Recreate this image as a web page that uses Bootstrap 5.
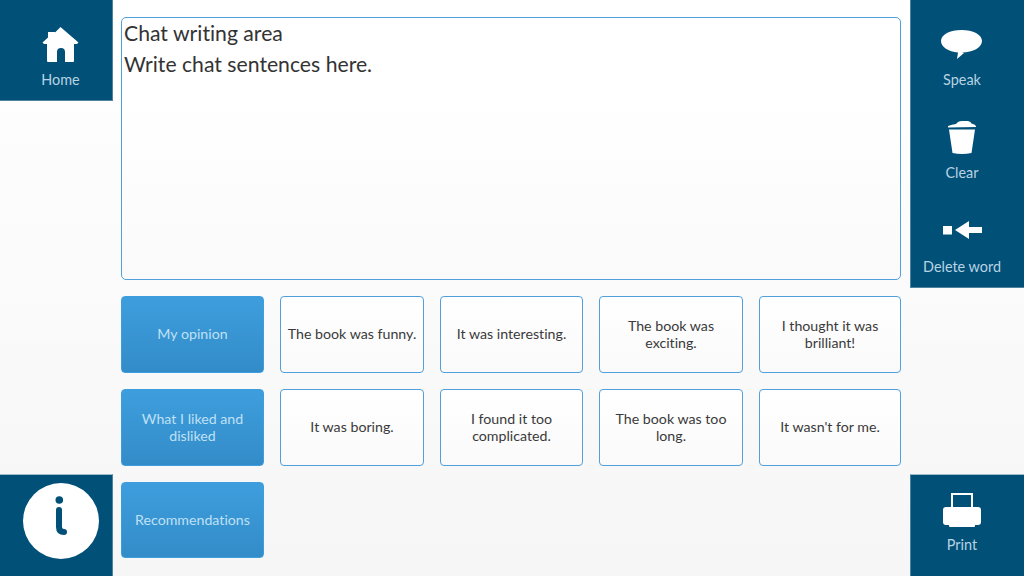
<!DOCTYPE html>
<html lang="en">
<head>
<meta charset="utf-8">
<title>Chat writing</title>
<link rel="stylesheet" href="https://cdn.jsdelivr.net/npm/bootstrap@5.3.0/dist/css/bootstrap.min.css">
<style>
html,body{height:576px;overflow:hidden}
body{font-family:"Lato","Liberation Sans",sans-serif;font-variant-ligatures:none;background:linear-gradient(#fff,#f6f6f6);color:#333}
.app-shell{width:1024px;height:576px}
.side-col{width:113px;flex:none}
.side-col-r{width:114px;flex:none;margin-left:9px}
.panel-dark{background:#005078;color:#b9d3e2;font-size:14.4px;line-height:17px;border:1px solid #4d83a0;border-width:0 1px 1px 0;padding-left:9px}
.side-col-r .panel-dark{border-width:0 0 1px 1px;padding-left:0;padding-right:11px}
.side-tools{height:288px}
.tool-btn{height:94px;padding-top:26px}
.tool-btn:first-child{height:93px}
.tool-first{height:101px;padding-top:26px}
.tool-icon{height:37px;margin-bottom:8px}
.panel-bottom{height:102px;border-width:1px 1px 0 0!important;border-top-color:#9dbccd!important}
.panel-info{padding-bottom:10px}
.panel-print{padding-top:16px}
.side-col-r .panel-bottom{border-width:1px 0 0 1px!important}
.center-col{width:780px;flex:none;margin-left:8px;padding-top:17px}
.write-box{height:263px;border:1px solid #4fa0dc;border-radius:5px;padding:0 3px 0 2px;font-size:21.2px;line-height:31px;color:#333;margin-bottom:16px;background:linear-gradient(#fff 30%,#fafafa)}
.phrase-grid{display:grid;grid-template-columns:143px 144px 143px 144px 142px;grid-auto-rows:77px;gap:16px}
.phrase{border:1px solid #4fa0dc;border-radius:4px;background:linear-gradient(#fff,#fafafa);font-size:14.2px;line-height:17px;color:#3a3a3a;padding:0 2px 2px;text-align:center}
.phrase-wrap{padding:0 8px 2px}
.phrase-cat{background:linear-gradient(#3e9edd,#338cc8);border-color:#3e9edd;color:#bfe0f5}
.last-row{height:76px}
.info-disc{width:76px;height:76px;background:#fff;border-radius:50%}
</style>
</head>
<body>
<div class="app-shell d-flex">
  <div class="side-col d-flex flex-column justify-content-between">
    <div class="panel-dark tool-first text-center">
      <div class="tool-icon d-flex justify-content-center">
        <svg width="37" height="37" viewBox="0 0 37 37" aria-hidden="true"><path fill="#fff" d="M18.500 1 L36.500 16.500 L35 18 L32 18 L32 35 Q32 36 31 36 L23 36 L23 26 Q23 22 19 22 Q15 22 15 26 L15 36 L6 36 Q5 36 5 35 L5 18 L2 18 L.5 16.500 L6 11.500 L6 6 L13 6 L13 6.500 Z"/></svg>
      </div>
      Home
    </div>
    <div class="panel-dark panel-bottom panel-info d-flex align-items-center justify-content-center">
      <div class="info-disc">
        <svg class="d-block" width="76" height="76" viewBox="0 0 76 76" aria-hidden="true"><circle cx="36.300" cy="17" r="3.800" fill="#005078"/><path d="M36 27 V44 Q36 49 41 49" fill="none" stroke="#005078" stroke-width="6" stroke-linecap="round"/></svg>
      </div>
    </div>
  </div>
  <div class="center-col">
    <div class="write-box">Chat writing area<br>Write chat sentences here.</div>
    <div class="phrase-grid">
      <div class="phrase phrase-cat d-flex align-items-center justify-content-center">My opinion</div>
      <div class="phrase d-flex align-items-center justify-content-center">The book was funny.</div>
      <div class="phrase d-flex align-items-center justify-content-center">It was interesting.</div>
      <div class="phrase phrase-wrap d-flex align-items-center justify-content-center">The book was exciting.</div>
      <div class="phrase phrase-wrap d-flex align-items-center justify-content-center">I thought it was brilliant!</div>
      <div class="phrase phrase-cat phrase-wrap d-flex align-items-center justify-content-center">What I liked and disliked</div>
      <div class="phrase d-flex align-items-center justify-content-center">It was boring.</div>
      <div class="phrase phrase-wrap d-flex align-items-center justify-content-center">I found it too complicated.</div>
      <div class="phrase phrase-wrap d-flex align-items-center justify-content-center">The book was too long.</div>
      <div class="phrase d-flex align-items-center justify-content-center">It wasn't for me.</div>
      <div class="phrase phrase-cat last-row d-flex align-items-center justify-content-center">Recommendations</div>
    </div>
  </div>
  <div class="side-col-r d-flex flex-column justify-content-between">
    <div class="panel-dark side-tools text-center">
      <div class="tool-btn">
        <div class="tool-icon d-flex justify-content-center">
          <svg width="42" height="37" viewBox="0 0 42 37" aria-hidden="true"><path fill="#fff" d="M20.500 4 C32 4 41 8.500 41 15 C41 21.500 32 26.500 21 26.500 L23 27 L16 33 L17 26.500 C7.500 25.500 0 21 0 15 C0 8.500 9 4 20.500 4Z"/></svg>
        </div>
        Speak
      </div>
      <div class="tool-btn">
        <div class="tool-icon d-flex justify-content-center">
          <svg width="30" height="37" viewBox="0 0 30 37" aria-hidden="true"><path fill="#fff" d="M1 7 Q5 5.500 9 5 Q11 2 15 2 L21 2 Q24 2.500 24.500 4.500 Q28 5 29 7 L29 8 L1 8.500Z M2 10.500 L28 10.500 L24.500 34 Q15 36 5.500 34Z"/></svg>
        </div>
        Clear
      </div>
      <div class="tool-btn">
        <div class="tool-icon d-flex justify-content-center">
          <svg width="40" height="37" viewBox="0 0 40 37" aria-hidden="true"><path fill="#fff" d="M1 13 H10 V21.500 H1Z M13 17 L27 8 V14 H40 V20 H27 V26Z"/></svg>
        </div>
        Delete word
      </div>
    </div>
    <div class="panel-dark panel-bottom panel-print text-center">
      <div class="tool-icon d-flex justify-content-center">
        <svg width="38" height="37" viewBox="0 0 38 37" aria-hidden="true"><path fill="#fff" fill-rule="evenodd" d="M8 2 H30 V16 H35 Q38 16 38 19 V31 Q38 34 35 34 H32 V35 Q32 36 31 36 H7 Q6 36 6 35 V34 H3 Q0 34 0 31 V19 Q0 16 3 16 H8Z M10 4 V16 H28 V4Z"/></svg>
      </div>
      Print
    </div>
  </div>
</div>
<script src="https://cdn.jsdelivr.net/npm/bootstrap@5.3.0/dist/js/bootstrap.bundle.min.js"></script>
</body>
</html>
